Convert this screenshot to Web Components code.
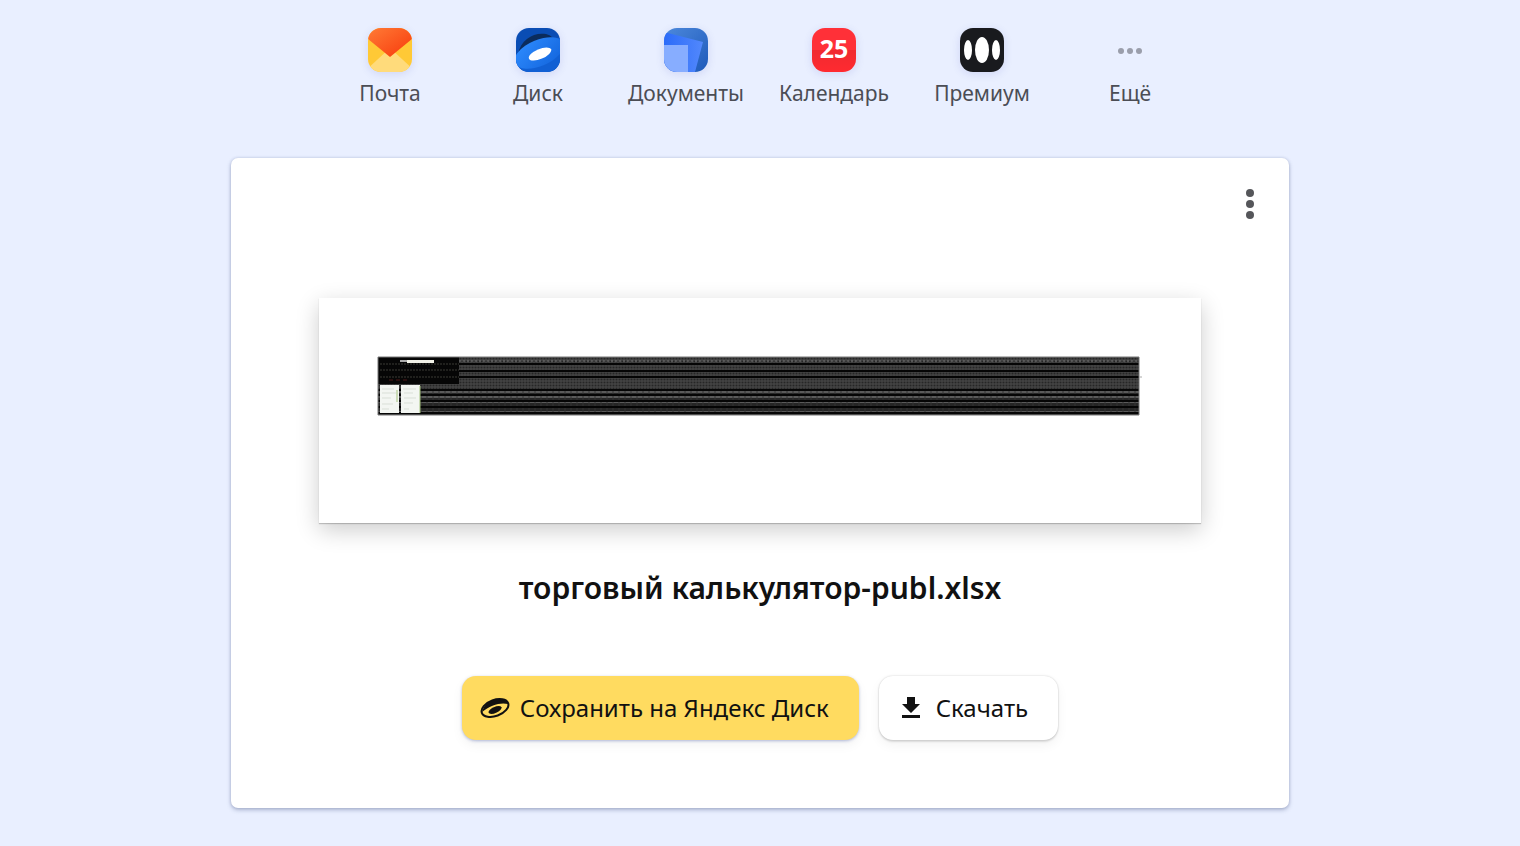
<!DOCTYPE html>
<html lang="ru">
<head>
<meta charset="utf-8">
<meta name="viewport" content="width=device-width, initial-scale=1">
<title>торговый калькулятор-publ.xlsx</title>
<style>
    body {
        margin: 0;
        min-height: 100vh;
        background: #e9efff;
        color: #111;
        font-family: "Noto Sans", "Open Sans", sans-serif;
    }
</style>
</head>
<body>

<services-bar>
    <service-link name="Почта">
        <svg viewBox="0 0 44 44">
            <defs>
                <clipPath id="mail-clip"><rect width="44" height="44" rx="13"/></clipPath>
                <linearGradient id="mail-flap" x1="0" y1="0" x2="1" y2="1">
                    <stop offset="0" stop-color="#ff7b36"/><stop offset="1" stop-color="#f8390b"/>
                </linearGradient>
            </defs>
            <g clip-path="url(#mail-clip)">
                <rect width="44" height="44" fill="#ffc936"/>
                <path d="M-4 44L22 20l26 24z" fill="#ffdb7b"/>
                <path d="M0 0h44v11L22 29 0 11z" fill="url(#mail-flap)"/>
            </g>
        </svg>
    </service-link>
    <service-link name="Диск">
        <svg viewBox="0 0 44 44">
            <defs>
                <clipPath id="disk-clip"><rect width="44" height="44" rx="13"/></clipPath>
                <linearGradient id="disk-body" x1="0" y1="0" x2="1" y2="1">
                    <stop offset="0" stop-color="#2e8cff"/><stop offset="1" stop-color="#1264dc"/>
                </linearGradient>
            </defs>
            <g clip-path="url(#disk-clip)">
                <rect width="44" height="44" fill="#0a4db4"/>
                <path d="M2 26C5 11 18 4 30 6c4 1 7 3 8 7L2 30z" fill="#0b2c5c"/>
                <path d="M0 44V29C6 17 26 9 44 10v34z" fill="#1160d4"/>
                <ellipse cx="23" cy="25" rx="26" ry="13" transform="rotate(-23 23 25)" fill="url(#disk-body)"/>
                <ellipse cx="24" cy="26" rx="12" ry="5" transform="rotate(-23 24 26)" fill="#fff"/>
            </g>
        </svg>
    </service-link>
    <service-link name="Документы">
        <svg viewBox="0 0 44 44">
            <defs>
                <clipPath id="docs-clip"><rect width="44" height="44" rx="13"/></clipPath>
                <linearGradient id="docs-back" x1="0" y1="0" x2="1" y2="1">
                    <stop offset="0" stop-color="#4d89dc"/><stop offset="1" stop-color="#1d59ba"/>
                </linearGradient>
                <linearGradient id="docs-mid" x1="0" y1="0" x2="1" y2="0">
                    <stop offset="0" stop-color="#2b6bf9"/><stop offset="1" stop-color="#5288fc"/>
                </linearGradient>
            </defs>
            <g clip-path="url(#docs-clip)">
                <rect width="44" height="44" fill="url(#docs-back)"/>
                <path d="M0 4l39 10-8 30H0z" fill="url(#docs-mid)"/>
                <path d="M0 17h24v27H0z" fill="#87adff"/>
            </g>
        </svg>
    </service-link>
    <service-link name="Календарь">
        <span class="day">25</span>
    </service-link>
    <service-link name="Премиум">
        <svg viewBox="0 0 44 44">
            <rect width="44" height="44" rx="13" fill="#191a1e"/>
            <g fill="#fff">
                <ellipse cx="8" cy="22" rx="4" ry="10"/>
                <ellipse cx="22" cy="22" rx="7" ry="13"/>
                <ellipse cx="36" cy="22" rx="4" ry="10"/>
            </g>
        </svg>
    </service-link>
    <service-link name="Ещё" flat>
        <svg viewBox="0 0 44 44">
            <g fill="#9a9eab">
                <circle cx="13" cy="23" r="3"/>
                <circle cx="22" cy="23" r="3"/>
                <circle cx="31" cy="23" r="3"/>
            </g>
        </svg>
    </service-link>
</services-bar>

<file-card>
    <sheet-preview slot="preview"></sheet-preview>
    <span slot="title">торговый калькулятор-publ.xlsx</span>
    <action-button slot="actions" primary>
        <svg slot="icon" width="30" height="24" viewBox="0 0 30 24">
            <ellipse cx="15" cy="12" rx="14" ry="8" transform="rotate(-20 15 12)" fill="none" stroke="#111" stroke-width="2"/>
            <path d="M2 16C4 8 11 3 21 3c4 0 7 2 7 5C21 6 10 9 2 16z" fill="#111"/>
            <ellipse cx="15" cy="14" rx="7" ry="3" transform="rotate(-24 15 14)" fill="#111"/>
        </svg>
        Сохранить на Яндекс Диск
    </action-button>
    <action-button slot="actions">
        <svg slot="icon" width="20" height="24" viewBox="0 0 20 24">
            <path d="M6 1h8v7h5l-9 9-9-9h5zM1 19h18v3H1z" fill="#111"/>
        </svg>
        Скачать
    </action-button>
</file-card>

<script>
function createTemplate(html) {
    const template = document.createElement('template');
    template.innerHTML = html;
    return template;
}

const barTemplate = createTemplate(`
    <style>
        :host {
            display: block;
            padding: 28px 16px 50px;
        }

        nav {
            display: flex;
            flex-wrap: wrap;
            justify-content: center;
        }
    </style>
    <nav aria-label="Сервисы"><slot></slot></nav>
`);

class ServicesBar extends HTMLElement {
    constructor() {
        super();
        this.attachShadow({ mode: 'open' });
        this.shadowRoot.appendChild(barTemplate.content.cloneNode(true));
    }
}

const linkTemplate = createTemplate(`
    <style>
        :host {
            display: block;
            width: 148px;
        }

        a {
            display: flex;
            flex-direction: column;
            align-items: center;
            gap: 6px;
            color: #4b4d55;
            font-size: 21px;
            line-height: 30px;
            text-decoration: none;
        }

        .icon {
            width: 44px;
            height: 44px;
            border-radius: 13px;
            box-shadow: 0 2px 8px rgba(80, 90, 190, 0.16);
        }

        :host([flat]) .icon {
            box-shadow: none;
        }

        ::slotted(svg) {
            display: block;
            width: 44px;
            height: 44px;
        }

        ::slotted(.day) {
            display: block;
            height: 44px;
            border-radius: 13px;
            background: linear-gradient(#ff3038 50%, #f02a30 50%, #ff2a30);
            color: #fff;
            font-size: 25px;
            font-weight: 700;
            line-height: 40px;
            text-align: center;
        }
    </style>
    <a href="#">
        <span class="icon"><slot></slot></span>
        <span class="name"></span>
    </a>
`);

class ServiceLink extends HTMLElement {
    constructor() {
        super();
        this.attachShadow({ mode: 'open' });
        this.shadowRoot.appendChild(linkTemplate.content.cloneNode(true));
        this.shadowRoot.querySelector('.name').textContent = this.getAttribute('name');
    }
}

const cardTemplate = createTemplate(`
    <style>
        :host {
            display: block;
            box-sizing: border-box;
            width: calc(100% - 32px);
            max-width: 1058px;
            margin: 0 auto 38px;
            padding: 24px 16px 68px;
            border-radius: 7px;
            background: #fff;
            box-shadow: 0 2px 4px rgba(60, 75, 120, 0.35), 0 0 3px rgba(60, 75, 140, 0.2);
        }

        header {
            display: flex;
            justify-content: flex-end;
        }

        .menu {
            width: 46px;
            height: 44px;
            padding: 0;
            border: 0;
            background: none;
            cursor: pointer;
        }

        .menu svg {
            display: block;
            margin: auto;
        }

        .content {
            display: flex;
            flex-direction: column;
            align-items: center;
            padding: 72px 72px 0;
        }

        h1 {
            margin: 45px 0 68px;
            font-size: 30px;
            font-weight: 600;
            line-height: 40px;
            text-align: center;
        }

        .actions {
            display: flex;
            flex-wrap: wrap;
            justify-content: center;
            gap: 20px;
        }
    </style>
    <header>
        <button class="menu" type="button" aria-label="Меню">
            <svg width="8" height="30" viewBox="0 0 8 30" fill="#55565a">
                <circle cx="4" cy="4" r="4"/>
                <circle cx="4" cy="15" r="4"/>
                <circle cx="4" cy="26" r="4"/>
            </svg>
        </button>
    </header>
    <div class="content">
        <slot name="preview"></slot>
        <h1><slot name="title"></slot></h1>
        <div class="actions"><slot name="actions"></slot></div>
    </div>
`);

class FileCard extends HTMLElement {
    constructor() {
        super();
        this.attachShadow({ mode: 'open' });
        this.shadowRoot.appendChild(cardTemplate.content.cloneNode(true));
    }
}

const previewTemplate = createTemplate(`
    <style>
        :host {
            display: block;
            box-sizing: border-box;
            width: 100%;
            padding: 58px 58px 107px;
            background: #fff;
            box-shadow: 0 1px 1px rgba(0, 0, 0, 0.2), 0 7px 22px rgba(0, 0, 0, 0.2);
        }

        svg {
            display: block;
            width: 100%;
        }
    </style>
    <svg viewBox="0 0 766 60" aria-hidden="true">
        <defs>
            <pattern id="cells" width="6" height="3" patternUnits="userSpaceOnUse">
                <path d="M0 1h6" stroke="#4c4c4c"/>
                <path d="M1 0v3M4 0v3" stroke="#484848"/>
            </pattern>
            <pattern id="rows" width="6" height="5" patternUnits="userSpaceOnUse">
                <path d="M0 1h6" stroke="#5a5a5a" stroke-width="2"/>
                <path d="M2 0v5" stroke="#333"/>
            </pattern>
        </defs>
        <rect x="1" y="1" width="761" height="58" fill="#262626"/>
        <rect x="1" y="1" width="761" height="32" fill="url(#cells)"/>
        <rect x="1" y="33" width="761" height="24" fill="url(#rows)"/>
        <path d="M58 5h704" stroke="#777" stroke-dasharray="2 2"/>
        <path d="M82 8h680M82 15h680M82 21h680M1 34h761M1 39h761M1 45h761M1 51h761M1 57h761" stroke="#050505" stroke-width="2"/>
        <rect x="1" y="1" width="81" height="27" fill="#060606"/>
        <path d="M3 8h79M3 14h79M3 21h79" stroke="#3a3a34" stroke-dasharray="2 1"/>
        <path d="M23 5h8" stroke="#aaa" stroke-width="2"/>
        <rect x="30" y="4" width="27" height="3" fill="#f1f1e7"/>
        <path d="M12 24h18" stroke="#4a1717" stroke-dasharray="4 3"/>
        <rect x="3" y="29" width="19" height="28" fill="#f3f6f2"/>
        <rect x="24" y="29" width="19" height="28" fill="#f3f6f2"/>
        <path d="M5 33h12M5 37h14M5 42h9M5 48h11M5 53h7M26 33h13M27 37h9M27 42h12M27 47h9M27 53h5" stroke="#d9dfd7"/>
        <path d="M20 34v12M43 30v27" stroke="#a3c27c"/>
        <path d="M1 1h761v58H1z" fill="none" stroke="#777"/>
        <path d="M762 21h3" stroke="#aaa"/>
    </svg>
`);

class SheetPreview extends HTMLElement {
    constructor() {
        super();
        this.attachShadow({ mode: 'open' });
        this.shadowRoot.appendChild(previewTemplate.content.cloneNode(true));
    }
}

const buttonTemplate = createTemplate(`
    <style>
        :host {
            display: block;
        }

        button {
            display: flex;
            align-items: center;
            gap: 10px;
            height: 64px;
            padding: 0 30px 0 18px;
            border: 0;
            border-radius: 14px;
            background: #fff;
            box-shadow: 0 0 2px rgba(0, 0, 0, 0.2), 0 2px 2px rgba(0, 0, 0, 0.1), 0 5px 12px rgba(0, 0, 0, 0.05);
            color: #111;
            font: inherit;
            font-size: 24px;
            line-height: 34px;
            cursor: pointer;
        }

        :host([primary]) button {
            background: #ffdb60;
            box-shadow: 0 1px 3px rgba(70, 90, 170, 0.4), 0 5px 12px rgba(0, 0, 0, 0.05);
        }

        :host(:not([primary])) button {
            gap: 15px;
            padding-left: 22px;
        }

        ::slotted(svg) {
            display: block;
        }
    </style>
    <button type="button">
        <slot name="icon"></slot>
        <span><slot></slot></span>
    </button>
`);

class ActionButton extends HTMLElement {
    constructor() {
        super();
        this.attachShadow({ mode: 'open' });
        this.shadowRoot.appendChild(buttonTemplate.content.cloneNode(true));
    }
}

window.customElements.define('services-bar', ServicesBar);
window.customElements.define('service-link', ServiceLink);
window.customElements.define('file-card', FileCard);
window.customElements.define('sheet-preview', SheetPreview);
window.customElements.define('action-button', ActionButton);
</script>
</body>
</html>
